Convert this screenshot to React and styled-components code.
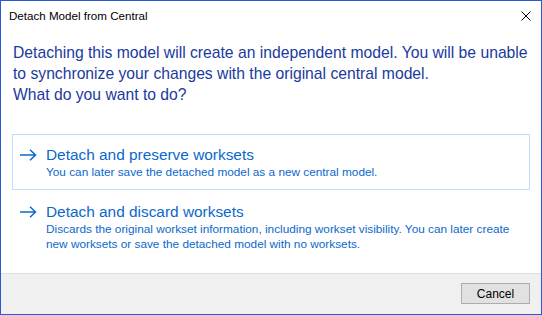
import React from "react";
import styled, { createGlobalStyle } from "styled-components";

const Global = createGlobalStyle`
  html, body { margin: 0; padding: 0; background: #fff; }
  * { box-sizing: border-box; }
`;

const Window = styled.div`
  width: 542px;
  height: 315px;
  border: 1px solid #2b58d8;
  background: #fff;
  display: flex;
  flex-direction: column;
  font-family: "Liberation Sans", Arial, sans-serif;
`;

const TitleBar = styled.div`
  height: 29px;
  display: flex;
  align-items: center;
  justify-content: space-between;
  padding: 0 9px 1px 8px;
`;

const TitleText = styled.div`
  font-size: 11.6px;
  color: #000;
  line-height: 16px;
  padding-top: 2px;
`;

const CloseButton = styled.div`
  width: 12px;
  height: 12px;
  display: flex;
  align-items: center;
  justify-content: center;
  padding-top: 2px;
`;

const Content = styled.div`
  flex: 1;
  padding: 12px 11px 0 11px;
  display: flex;
  flex-direction: column;
`;

const Instruction = styled.div`
  font-size: 15.7px;
  line-height: 21px;
  color: #1a3a9e;
  padding-left: 1px;
  white-space: nowrap;
  margin-bottom: 29px;
`;

const CommandLink = styled.div`
  display: flex;
  align-items: flex-start;
  border: 1px solid ${(p) => (p.$hover ? "#c5ddf7" : "transparent")};
  padding: 10px 8px 9px 7px;
  margin-bottom: 1px;
`;

const ArrowBox = styled.div`
  width: 26px;
  height: 20px;
  display: flex;
  align-items: center;
  flex-shrink: 0;
`;

const CommandText = styled.div`
  display: flex;
  flex-direction: column;
  color: #0b68cc;
`;

const CommandTitle = styled.div`
  font-size: 15.4px;
  line-height: 20px;
`;

const CommandNote = styled.div`
  font-size: 11.8px;
  line-height: 15px;
  white-space: nowrap;
`;

const Footer = styled.div`
  height: 41px;
  background: #f0f0f0;
  border-top: 1px solid #dfdfdf;
  display: flex;
  justify-content: flex-end;
  align-items: flex-start;
  padding: 9px 11px 0 0;
`;

const Button = styled.button`
  width: 69px;
  height: 21px;
  background: #e1e1e1;
  border: 1px solid #adadad;
  font-family: "Liberation Sans", Arial, sans-serif;
  font-size: 12px;
  color: #000;
  padding: 0;
  line-height: 18px;
`;

const Arrow = () => (
  <svg width="17" height="12" viewBox="0 0 17 12">
    <path
      d="M0 6 H15.5 M10 0.8 L15.5 6 L10 11.2"
      fill="none"
      stroke="#0b68cc"
      strokeWidth="1.5"
    />
  </svg>
);

const CloseIcon = () => (
  <svg width="10" height="10" viewBox="0 0 10 10">
    <path d="M0.5 0.5 L9.5 9.5 M9.5 0.5 L0.5 9.5" stroke="#000" strokeWidth="1" />
  </svg>
);

const Command = ({ title, note, hover }) => (
  <CommandLink $hover={hover}>
    <ArrowBox>
      <Arrow />
    </ArrowBox>
    <CommandText>
      <CommandTitle>{title}</CommandTitle>
      <CommandNote>{note}</CommandNote>
    </CommandText>
  </CommandLink>
);

export default function App() {
  return (
    <>
      <Global />
      <Window>
        <TitleBar>
          <TitleText>Detach Model from Central</TitleText>
          <CloseButton>
            <CloseIcon />
          </CloseButton>
        </TitleBar>
        <Content>
          <Instruction>
            Detaching this model will create an independent model. You will be unable
            <br />
            to synchronize your changes with the original central model.
            <br />
            What do you want to do?
          </Instruction>
          <Command
            hover
            title="Detach and preserve worksets"
            note="You can later save the detached model as a new central model."
          />
          <Command
            title="Detach and discard worksets"
            note={
              <>
                Discards the original workset information, including workset visibility. You can later create
                <br />
                new worksets or save the detached model with no worksets.
              </>
            }
          />
        </Content>
        <Footer>
          <Button>Cancel</Button>
        </Footer>
      </Window>
    </>
  );
}
